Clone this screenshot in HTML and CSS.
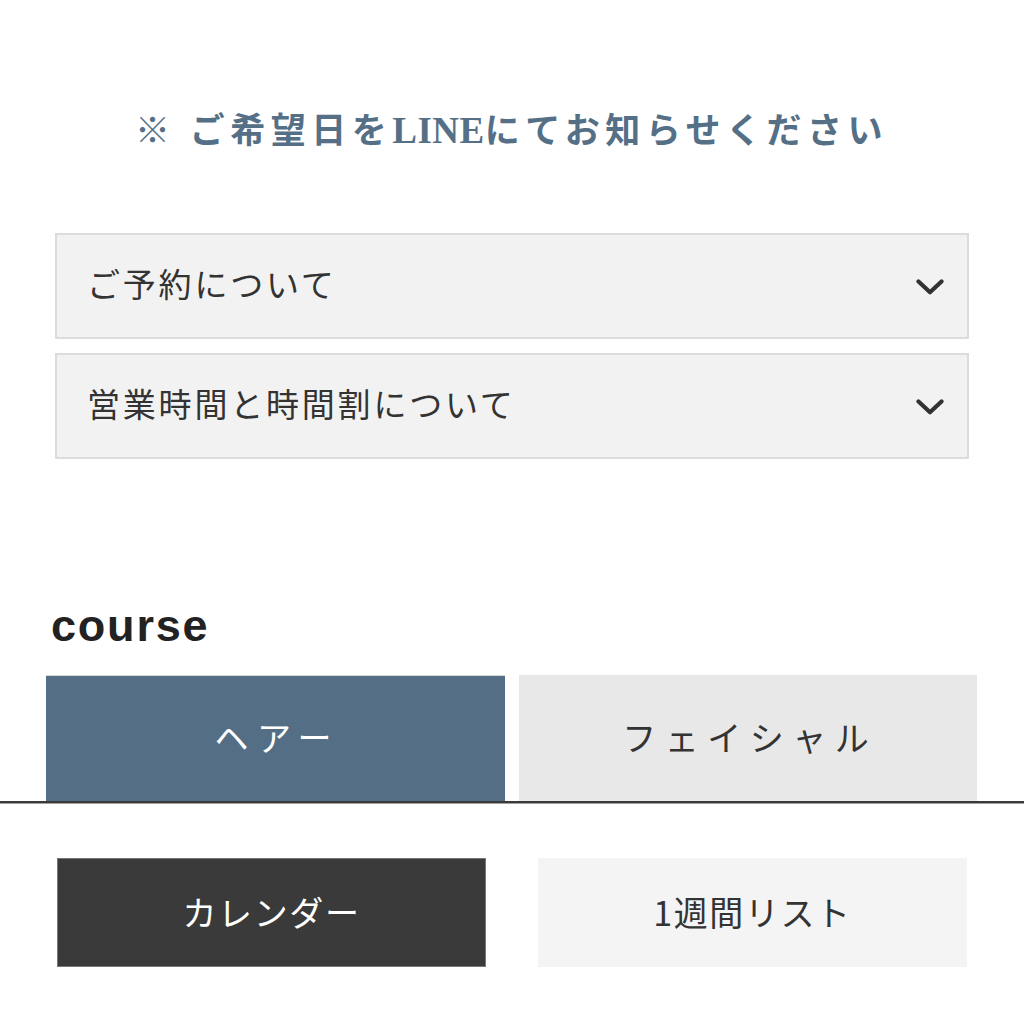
FILE: index.html
```
<!DOCTYPE html>
<html lang="ja">
<head>
<meta charset="utf-8">
<title>予約</title>
<link rel="stylesheet" href="styles.css">
</head>
<body>
<main class="page">
  <p class="notice">※ ご希望日を<span class="latin">LINE</span>にてお知らせください</p>

  <div class="faq">
    <div class="faq-item">
      <span class="faq-title">ご予約について</span>
      <svg class="chevron" width="28" height="16" viewBox="0 0 28 16"><polyline points="2.5,2.5 14,13.2 25.5,2.5" fill="none" stroke="#333" stroke-width="4.2" stroke-linecap="round" stroke-linejoin="round"/></svg>
    </div>
    <div class="faq-item">
      <span class="faq-title">営業時間と時間割について</span>
      <svg class="chevron" width="28" height="16" viewBox="0 0 28 16"><polyline points="2.5,2.5 14,13.2 25.5,2.5" fill="none" stroke="#333" stroke-width="4.2" stroke-linecap="round" stroke-linejoin="round"/></svg>
    </div>
  </div>

  <h2 class="section-title">course</h2>
  <div class="tabs">
    <div class="tab tab-active">ヘアー</div>
    <div class="tab">フェイシャル</div>
  </div>
</main>

<nav class="bottom-bar">
  <div class="view-btn view-btn-active">カレンダー</div>
  <div class="view-btn">1週間リスト</div>
</nav>
</body>
</html>
```
FILE: styles.css
```
html, body {
  margin: 0;
  padding: 0;
  background: #fff;
}

body {
  font-family: "Noto Sans CJK JP", "Noto Sans", sans-serif;
  color: #333;
  height: 1024px;
  overflow: hidden;
}

.page {
  padding: 108px 47px 0 46px;
}

.notice {
  margin: 0;
  text-align: center;
  font-size: 35px;
  line-height: 46px;
  font-weight: 700;
  letter-spacing: 5.5px;
  color: #557086;
  font-family: "Liberation Serif", "Noto Sans CJK JP", serif;
  padding-left: 0;
}

.notice .latin {
  font-family: "Liberation Serif", serif;
  font-size: 37px;
  letter-spacing: 0.5px;
}

.faq {
  margin: 78px 8px 0 9px;
  display: flex;
  flex-direction: column;
  gap: 14px;
}

.faq-item {
  height: 102px;
  background: #f2f2f2;
  border: 2px solid #dcdcdc;
  display: flex;
  align-items: center;
  justify-content: space-between;
  padding: 0 23px 0 30px;
}

.faq-title {
  font-size: 33px;
  letter-spacing: 2.8px;
  color: #333;
  margin-bottom: 7px;
}

.chevron {
  display: block;
  margin-top: 2px;
}

.section-title {
  margin: 139px 0 0 5px;
  font-family: "Liberation Sans", "Noto Sans", sans-serif;
  font-weight: 700;
  font-size: 45px;
  line-height: 56px;
  letter-spacing: 1.8px;
  color: #222;
}

.tabs {
  margin-top: 21px;
  display: grid;
  grid-template-columns: 1fr 1fr;
  gap: 14px;
}

.tab {
  height: 126px;
  display: flex;
  align-items: center;
  justify-content: center;
  font-size: 34px;
  letter-spacing: 8.5px;
  background: #e8e8e8;
  color: #333;
  padding-left: 4px;
  padding-bottom: 4px;
  box-sizing: border-box;
}

.tab-active {
  background: #546f85;
  color: #fff;
  border-top: 1px solid #d8d8d8;
}

.bottom-bar {
  position: fixed;
  left: 0;
  right: 0;
  bottom: 0;
  height: 166px;
  background: #fff;
  border-top: 2px solid #3a3a3a;
  box-shadow: inset 0 1px 0 #a0a0a0;
  padding: 55px 57px 0 57px;
  display: grid;
  grid-template-columns: 1fr 1fr;
  column-gap: 52px;
  align-items: start;
}

.view-btn {
  height: 109px;
  display: flex;
  align-items: center;
  justify-content: center;
  font-size: 34px;
  letter-spacing: 1.6px;
  background: #f4f4f4;
  color: #333;
  box-sizing: border-box;
  padding-bottom: 2px;
}

.view-btn-active {
  background: #3a3a3a;
  color: #fff;
  border: 1px solid #777;
}
```
